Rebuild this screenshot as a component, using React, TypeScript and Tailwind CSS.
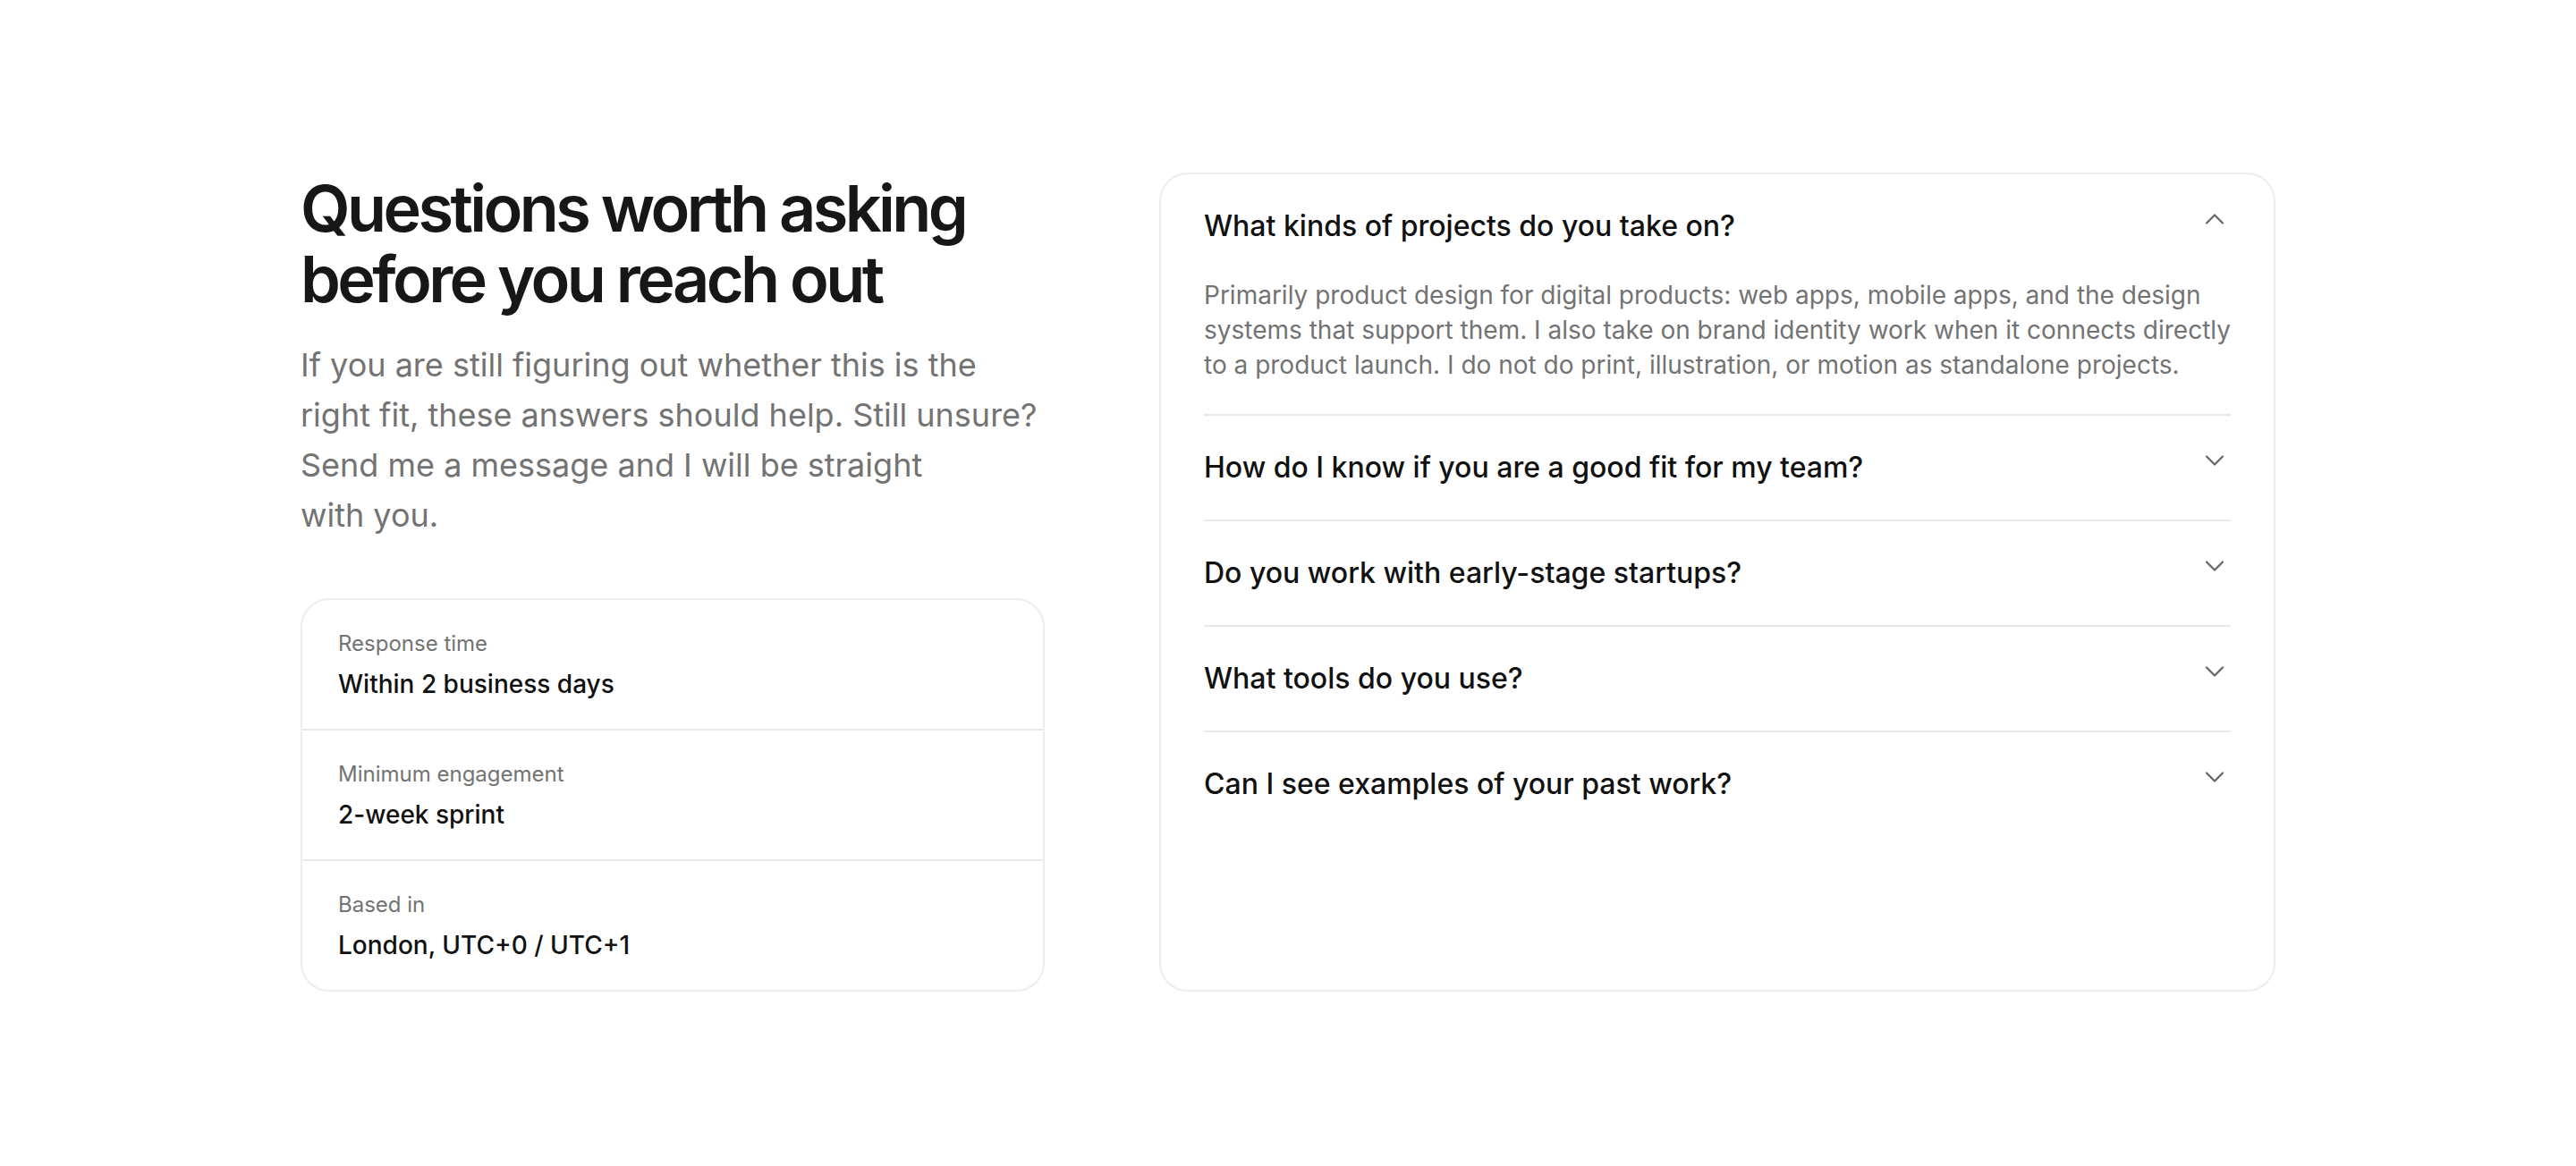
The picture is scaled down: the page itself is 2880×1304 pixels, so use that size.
import React, { useState } from 'react';
import { ChevronDown, ChevronUp } from 'lucide-react';

interface FaqItem {
  question: string;
  answer: string[];
}

const faqs: FaqItem[] = [
  {
    question: 'What kinds of projects do you take on?',
    answer: [
      'Primarily product design for digital products: web apps, mobile apps, and the design',
      'systems that support them. I also take on brand identity work when it connects directly',
      'to a product launch. I do not do print, illustration, or motion as standalone projects.',
    ],
  },
  { question: 'How do I know if you are a good fit for my team?', answer: [] },
  { question: 'Do you work with early-stage startups?', answer: [] },
  { question: 'What tools do you use?', answer: [] },
  { question: 'Can I see examples of your past work?', answer: [] },
];

const facts = [
  { label: 'Response time', value: 'Within 2 business days' },
  { label: 'Minimum engagement', value: '2-week sprint' },
  { label: 'Based in', value: 'London, UTC+0 / UTC+1' },
];

const App = () => {
  const [open, setOpen] = useState<number | null>(0);

  return (
    <div className="min-h-screen bg-white font-['Inter','Noto_Sans',sans-serif] antialiased">
      <div className="mx-auto grid w-[2208px] grid-cols-[832px_1fr] gap-[128px] py-[193px]">
        {/* left column */}
        <div className="flex flex-col">
          <h2 className="text-[72px] font-semibold leading-[1.1] tracking-[-0.05em] text-[#171717]">
            Questions worth asking
            <br />
            before you reach out
          </h2>
          <p className="mt-[29px] whitespace-nowrap text-[36px] leading-[56px] text-[#737373]">
            If you are still figuring out whether this is the
            <br />
            right fit, these answers should help. Still unsure?
            <br />
            Send me a message and I will be straight
            <br />
            with you.
          </p>
          <div className="mt-[65px] rounded-[32px] border-2 border-[#ededed]">
            {facts.map((f, i) => (
              <div
                key={f.label}
                className={`flex flex-col gap-1.5 px-10 pt-[31px] pb-[29px] ${i > 0 ? 'border-t-2 border-[#e8e8e8]' : ''}`}
              >
                <span className="text-[24px] leading-[36px] text-[#737373]">{f.label}</span>
                <span className="text-[28px] font-medium leading-[42px] text-[#111111]">{f.value}</span>
              </div>
            ))}
          </div>
        </div>

        {/* right column: accordion */}
        <div className="rounded-[32px] border-2 border-[#ededed] px-12">
          {faqs.map((item, i) => {
            const isOpen = open === i;
            return (
              <div key={item.question} className={i > 0 ? 'border-t-2 border-[#e8e8e8]' : ''}>
                <button
                  type="button"
                  onClick={() => setOpen(isOpen ? null : i)}
                  className="flex w-full items-start justify-between py-10 text-left"
                >
                  <span className="text-[32px] font-medium leading-[36px] text-[#111111]">{item.question}</span>
                  {isOpen ? (
                    <ChevronUp size={36} strokeWidth={1.5} className="-mt-2 shrink-0 text-[#666666]" />
                  ) : (
                    <ChevronDown size={36} strokeWidth={1.5} className="-mt-2 shrink-0 text-[#666666]" />
                  )}
                </button>
                {isOpen && item.answer.length > 0 && (
                  <p className="whitespace-nowrap pb-[35px] text-[28px] leading-[39px] text-[#737373]">
                    {item.answer.map((line, j) => (
                      <React.Fragment key={j}>
                        {line}
                        {j < item.answer.length - 1 && <br />}
                      </React.Fragment>
                    ))}
                  </p>
                )}
              </div>
            );
          })}
        </div>
      </div>
    </div>
  );
};

export default App;
